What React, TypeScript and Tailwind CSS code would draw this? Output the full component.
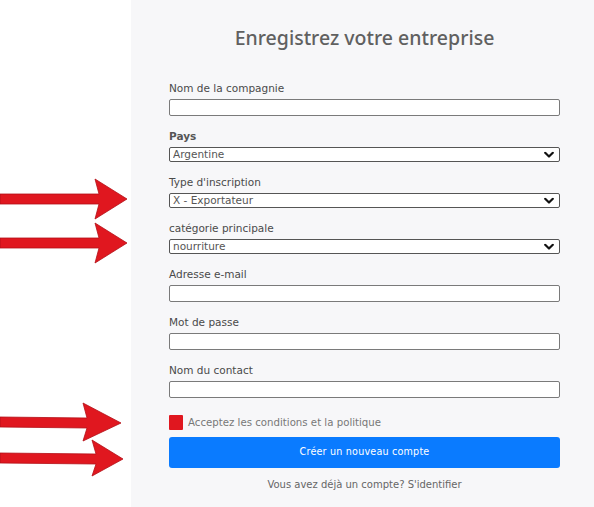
import React from "react";

const labelCls = "block h-[14px] leading-[14px] text-[10.5px] text-[#4a4a4a] mb-1";
const inputCls = "block w-full h-[17px] bg-white border border-[#7a7a7a] rounded-[2px] outline-none";

function Chevron() {
  return (
    <svg
      className="absolute right-[6px] top-1/2 -translate-y-1/2 pointer-events-none"
      width="10"
      height="7"
      viewBox="0 0 10 7"
    >
      <path d="M1.2 1.3 L5 5 L8.8 1.3" fill="none" stroke="#111" strokeWidth="2.2" strokeLinecap="round" strokeLinejoin="round" />
    </svg>
  );
}

function SelectField({ label, value, bold }: { label: string; value: string; bold?: boolean }) {
  return (
    <div>
      <label className={`${labelCls} ${bold ? "font-bold text-[#555]" : ""}`}>{label}</label>
      <div className="relative">
        <select
          defaultValue={value}
          className="block w-full h-[15px] appearance-none bg-white border border-[#555] rounded-[2px] pl-[3px] text-[10.5px] leading-[13px] text-[#555] outline-none"
        >
          <option>{value}</option>
        </select>
        <Chevron />
      </div>
    </div>
  );
}

function InputField({ label, type = "text" }: { label: string; type?: string }) {
  return (
    <div>
      <label className={labelCls}>{label}</label>
      <input type={type} className={inputCls} />
    </div>
  );
}

function Arrows() {
  const arrow = (y: number, tip: number, hx: number, half: number, tilt = 0) => (
    <path
      d={`M0 ${y - 5} L${hx + 4} ${y - 5 + tilt} L${hx} ${y - half} L${tip} ${y + tilt} L${hx} ${y + half} L${hx + 4} ${y + 5 + tilt} L0 ${y + 5} Z`}
      fill="#e0171f"
      stroke="#b30f16"
      strokeWidth="0.8"
      strokeLinejoin="round"
    />
  );
  return (
    <svg className="absolute left-0 top-0 pointer-events-none" width="131" height="507" viewBox="0 0 131 507">
      {arrow(199, 127, 95, 20)}
      {arrow(243, 127, 95, 20)}
      {arrow(422, 121, 83, 19, 1)}
      {arrow(458, 123, 92, 18, 1)}
    </svg>
  );
}

export default function App() {
  return (
    <div className="relative flex w-[594px] h-[507px] bg-white overflow-hidden" style={{ fontFamily: "'DejaVu Sans', sans-serif" }}>
      <div className="w-[131px] shrink-0 bg-white" />
      <div className="flex-1 bg-[#f7f7f9] pl-[38px] pr-[34px]">
        <h1 className="pt-[25px] h-[81px] text-center text-[19.5px] leading-[26px] text-[#606060] font-medium" style={{ fontFamily: "'Noto Sans', sans-serif" }}>
          Enregistrez votre entreprise
        </h1>
        <div className="flex flex-col gap-[13px]">
          <InputField label="Nom de la compagnie" />
          <SelectField label="Pays" value="Argentine" bold />
          <SelectField label="Type d'inscription" value="X - Exportateur" />
          <SelectField label="catégorie principale" value="nourriture" />
          <InputField label="Adresse e-mail" type="email" />
          <InputField label="Mot de passe" type="password" />
          <InputField label="Nom du contact" />
        </div>
        <div className="flex items-center gap-[5px] mt-[17px] h-[15px]">
          <span className="w-[14px] h-[15px] bg-[#e0171f] rounded-[1px]" />
          <span className="text-[10.2px] text-[#777]">Acceptez les conditions et la politique</span>
        </div>
        <button className="mt-[7px] w-full h-[31px] bg-[#0a7bff] rounded-[3px] text-white text-[9.6px] tracking-[0.2px]">
          Créer un nouveau compte
        </button>
        <p className="mt-[9px] text-center text-[10px] text-[#666]">Vous avez déjà un compte? S'identifier</p>
      </div>
      <Arrows />
    </div>
  );
}
